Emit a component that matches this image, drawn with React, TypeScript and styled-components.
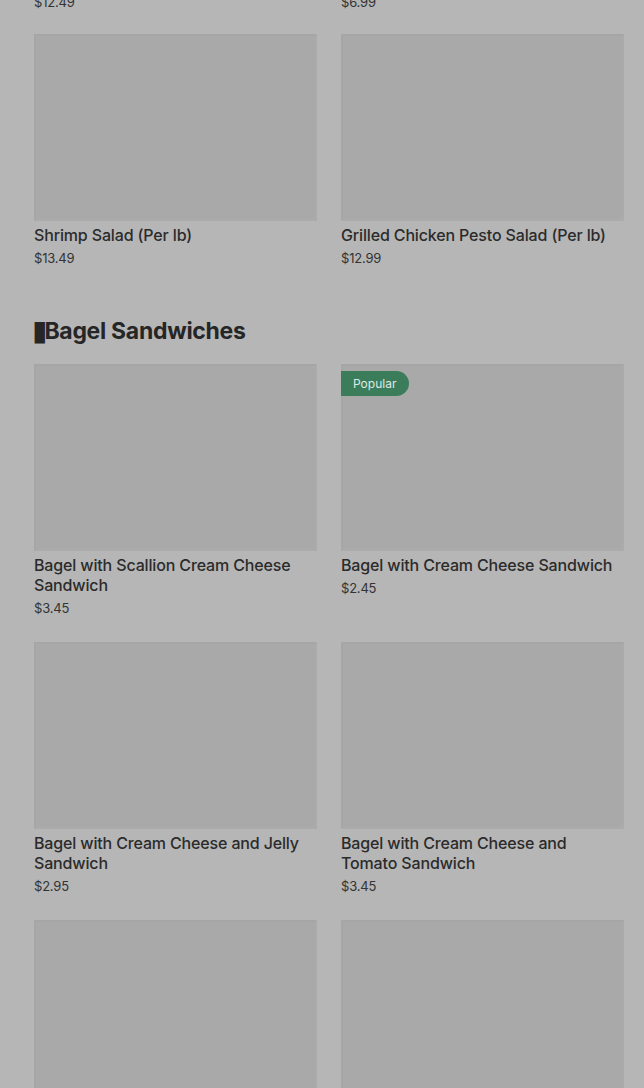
import React from "react";
import styled, { createGlobalStyle } from "styled-components";

const Global = createGlobalStyle`
  html, body { margin: 0; padding: 0; background: #b6b6b6; }
  body { font-family: Inter, "Noto Sans", "Liberation Sans", sans-serif; color: #2a2a2a; overflow: hidden; }
`;

const Page = styled.div`
  padding: 0 20px 0 34px;
  height: 1088px;
  overflow: hidden;
`;

const Grid = styled.div<{ $offset?: number }>`
  display: grid;
  grid-template-columns: 283px 283px;
  column-gap: 24px;
  row-gap: 25px;
  margin-top: ${(p) => p.$offset ?? 0}px;
`;

const Card = styled.div`
  display: flex;
  flex-direction: column;
  min-width: 0;
`;

const Thumb = styled.div`
  position: relative;
  height: 187px;
  background: #a9a9a9;
  box-shadow: inset 2px 2px 0 rgba(0, 0, 0, 0.015), inset -2px -2px 0 rgba(255, 255, 255, 0.03);
`;

const Badge = styled.span`
  position: absolute;
  top: 7px;
  left: 0;
  height: 25px;
  padding: 0 13px 0 12px;
  display: flex;
  align-items: center;
  background: #3b7d5a;
  color: #dfe9e3;
  font-size: 12px;
  font-weight: 400;
  border-radius: 0 13px 13px 0;
`;

const Title = styled.div`
  margin-top: 4px;
  font-size: 16px;
  line-height: 20px;
  font-weight: 500;
  color: #2b2b2b;
  letter-spacing: -0.15px;
`;

const Price = styled.div<{ $first?: boolean }>`
  margin-top: ${(p) => (p.$first ? "0" : "4px")};
  font-size: 13px;
  line-height: 18px;
  color: #333;
  letter-spacing: -0.2px;
`;

const Heading = styled.h2`
  margin: 50px 0 19px;
  height: 28px;
  font-size: 23px;
  line-height: 28px;
  font-weight: 700;
  color: #262626;
  letter-spacing: -0.3px;
  white-space: nowrap;
`;

const Bar = styled.span`
  font-family: "DejaVu Sans", sans-serif;
  font-size: 28px;
  line-height: 28px;
  font-weight: 400;
  margin-left: -2px;
  letter-spacing: -3px;
  vertical-align: top;
`;

type Item = { name: string; price: string; popular?: boolean };

const salads: Item[] = [
  { name: "Shrimp Salad (Per lb)", price: "$13.49" },
  { name: "Grilled Chicken Pesto Salad (Per lb)", price: "$12.99" },
];

const bagels: Item[] = [
  { name: "Bagel with Scallion Cream Cheese Sandwich", price: "$3.45" },
  { name: "Bagel with Cream Cheese Sandwich", price: "$2.45", popular: true },
  { name: "Bagel with Cream Cheese and Jelly Sandwich", price: "$2.95" },
  { name: "Bagel with Cream Cheese and Tomato Sandwich", price: "$3.45" },
];

function ItemCard({ item }: { item: Item }) {
  return (
    <Card>
      <Thumb>{item.popular && <Badge>Popular</Badge>}</Thumb>
      <Title>{item.name}</Title>
      <Price>{item.price}</Price>
    </Card>
  );
}

export default function App() {
  return (
    <>
      <Global />
      <Page>
        <Grid $offset={-7}>
          <Price $first>$12.49</Price>
          <Price $first>$6.99</Price>
        </Grid>
        <Grid $offset={23}>
          {salads.map((s) => (
            <ItemCard key={s.name} item={s} />
          ))}
        </Grid>
        <Heading>
          <Bar>▮</Bar>Bagel Sandwiches
        </Heading>
        <Grid>
          {bagels.map((s) => (
            <ItemCard key={s.name} item={s} />
          ))}
          <Card>
            <Thumb />
          </Card>
          <Card>
            <Thumb />
          </Card>
        </Grid>
      </Page>
    </>
  );
}
